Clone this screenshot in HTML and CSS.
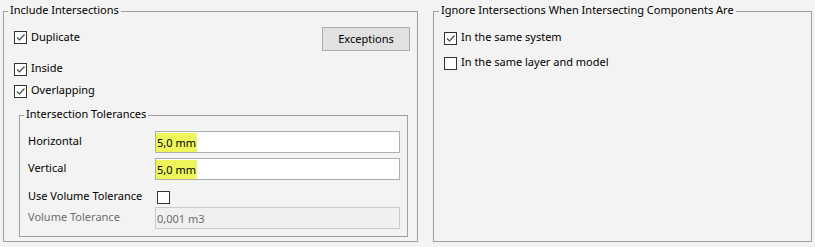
FILE: index.html
```html
<!doctype html>
<html>

<head>
    <title>Intersections</title>
    <meta charset="utf-8">
    <link rel="stylesheet" href="styles.css">
</head>

<body>
    <div class="dialog">
        <div class="group group-include">
            <span class="group-title">Include Intersections</span>
            <div class="row row-first">
                <label class="check"><span class="box"><svg viewBox="0 0 11 11" width="11" height="11"><polyline points="2,5.5 4.5,8 9.5,2.5" /></svg></span><span class="check-text">Duplicate</span></label>
                <button class="btn" type="button">Exceptions</button>
            </div>
            <div class="row row-inside">
                <label class="check"><span class="box"><svg viewBox="0 0 11 11" width="11" height="11"><polyline points="2,5.5 4.5,8 9.5,2.5" /></svg></span><span class="check-text">Inside</span></label>
            </div>
            <div class="row">
                <label class="check"><span class="box"><svg viewBox="0 0 11 11" width="11" height="11"><polyline points="2,5.5 4.5,8 9.5,2.5" /></svg></span><span class="check-text">Overlapping</span></label>
            </div>

            <div class="group group-tol">
                <span class="group-title">Intersection Tolerances</span>
                <div class="field">
                    <span class="field-label">Horizontal</span>
                    <div class="input"><span class="hl">5,0 mm</span></div>
                </div>
                <div class="field field-gap">
                    <span class="field-label">Vertical</span>
                    <div class="input"><span class="hl">5,0 mm</span></div>
                </div>
                <div class="field field-check">
                    <span class="field-label">Use Volume Tolerance</span>
                    <span class="box box-off"></span>
                </div>
                <div class="field field-last">
                    <span class="field-label disabled">Volume Tolerance</span>
                    <div class="input input-disabled">0,001 m3</div>
                </div>
            </div>
        </div>

        <div class="group group-ignore">
            <span class="group-title">Ignore Intersections When Intersecting Components Are</span>
            <div class="row">
                <label class="check"><span class="box"><svg viewBox="0 0 11 11" width="11" height="11"><polyline points="2,5.5 4.5,8 9.5,2.5" /></svg></span><span class="check-text">In the same system</span></label>
            </div>
            <div class="row row-second">
                <label class="check"><span class="box"></span><span class="check-text">In the same layer and model</span></label>
            </div>
        </div>
    </div>
</body>

</html>
```

FILE: styles.css
```css
html, body {
    margin: 0;
    background-color: #f3f3f3;
}

body {
    font-family: "Noto Sans", "Open Sans", sans-serif;
    font-size: 11px;
    color: #000;
}

.dialog {
    display: flex;
    gap: 15px;
    padding: 11px 0 0 3px;
    height: 231px;
}

.group {
    position: relative;
    box-sizing: border-box;
    border: 1px solid #a0a0a0;
}

.group-title {
    position: absolute;
    top: -10px;
    left: 4px;
    padding: 0 2px;
    line-height: 16px;
    background-color: #f3f3f3;
    white-space: nowrap;
}

.group-include {
    width: 415px;
    padding: 15px 9px 4px 10px;
}

.group-ignore {
    width: 379px;
    padding: 15px 10px 0 10px;
}

.group-ignore .group-title {
    left: 5px;
}

.row {
    display: flex;
    align-items: center;
    justify-content: space-between;
    height: 22px;
}

.row-first {
    height: 23px;
    margin-right: -2px;
}

.row-first .check {
    margin-top: -2px;
}

.row-inside {
    margin-top: 8px;
}

.row-second {
    margin-top: 3px;
}

.check {
    display: flex;
    align-items: center;
    gap: 4px;
}

.check-text {
    margin-top: -3px;
}

.box {
    box-sizing: border-box;
    display: inline-flex;
    align-items: center;
    justify-content: center;
    width: 13px;
    height: 13px;
    border: 1px solid #333;
    background-color: #fff;
}

.box svg polyline {
    fill: none;
    stroke: #4a4a4a;
    stroke-width: 1.2;
}

.box-off {
    margin-left: 2px;
}

.btn {
    box-sizing: border-box;
    width: 88px;
    height: 24px;
    margin-top: 1px;
    border: 1px solid #adadad;
    background-color: #e1e1e1;
    font-family: inherit;
    font-size: 11px;
    color: #000;
    padding: 0 0 2px 0;
}

.group-tol {
    margin: 13px 0 0 5px;
    padding: 15px 7px 7px 8px;
}

.field {
    display: flex;
    align-items: center;
    height: 22px;
}

.field-gap {
    margin-top: 5px;
}

.field-check {
    margin-top: 5px;
    height: 19px;
    align-items: flex-end;
}

.field-check .field-label {
    padding-bottom: 1px;
}

.field-last {
    margin-top: 3px;
}

.field-label {
    width: 127px;
    flex: none;
    padding-bottom: 4px;
}

.disabled {
    color: #6d6d6d;
}

.input {
    box-sizing: border-box;
    flex: 1;
    height: 22px;
    border: 1px solid #adadad;
    background-color: #fff;
    display: flex;
    align-items: center;
}

.hl {
    display: inline-block;
    height: 19px;
    line-height: 19px;
    padding: 0 1px;
    background-color: #eff65a;
}

.input-disabled {
    background-color: #f0f0f0;
    border-color: #cccccc;
    color: #6d6d6d;
    padding-left: 1px;
}
```
